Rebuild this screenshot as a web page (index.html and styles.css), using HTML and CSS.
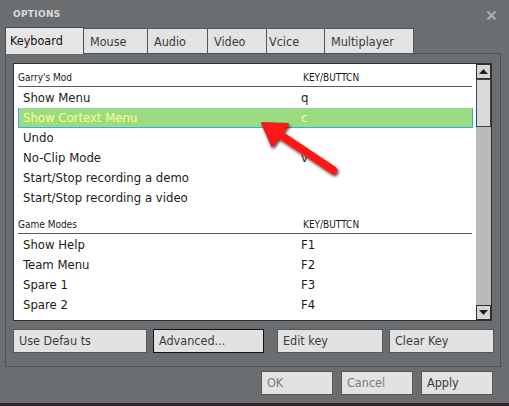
FILE: index.html
```html
<!DOCTYPE html>
<html>
<head>
<meta charset="utf-8">
<link rel="stylesheet" href="styles.css">
</head>
<body>
<div class="window">
  <div class="titlebar">
    <span class="title">OPTIONS</span>
    <svg class="close" width="11" height="11" viewBox="0 0 11 11"><path d="M1.5 1.5 L9.5 9.5 M9.5 1.5 L1.5 9.5" stroke="#a9abac" stroke-width="2.4" fill="none"/></svg>
  </div>
  <div class="tabs">
    <div class="tab active t-keyboard">Keyboard</div>
    <div class="tab t-mouse">Mouse</div>
    <div class="tab t-audio">Audio</div>
    <div class="tab t-video">Video</div>
    <div class="tab t-voice">Vcice</div>
    <div class="tab t-multi">Multiplayer</div>
  </div>
  <div class="panel">
    <div class="listbox">
      <div class="list">
        <div class="section first"><span class="col1">Garry's Mod</span><span>KEY/BUTTCN</span></div>
        <div class="row"><span class="col1">Show Menu</span><span>q</span></div>
        <div class="row selected"><span class="col1">Show Cortext Menu</span><span>c</span></div>
        <div class="row"><span class="col1">Undo</span><span></span></div>
        <div class="row"><span class="col1">No-Clip Mode</span><span>v</span></div>
        <div class="row"><span class="col1">Start/Stop recording a demo</span><span></span></div>
        <div class="row"><span class="col1">Start/Stop recording a video</span><span></span></div>
        <div class="section"><span class="col1">Game Modes</span><span>KEY/BUTTCN</span></div>
        <div class="row"><span class="col1">Show Help</span><span>F1</span></div>
        <div class="row"><span class="col1">Team Menu</span><span>F2</span></div>
        <div class="row"><span class="col1">Spare 1</span><span>F3</span></div>
        <div class="row"><span class="col1">Spare 2</span><span>F4</span></div>
      </div>
      <div class="scrollbar">
        <div class="sb-btn"><svg width="9" height="5" viewBox="0 0 9 5"><path d="M4.5 0 L9 5 L0 5 Z" fill="#1e1e1e"/></svg></div>
        <div class="sb-track"><div class="sb-thumb"></div></div>
        <div class="sb-btn"><svg width="9" height="5" viewBox="0 0 9 5"><path d="M0 0 L9 0 L4.5 5 Z" fill="#1e1e1e"/></svg></div>
      </div>
    </div>
    <div class="actions">
      <div class="btn b-defaults">Use Defau ts</div>
      <div class="btn focus b-advanced">Advanced...</div>
      <div class="btn b-edit">Edit key</div>
      <div class="btn b-clear">Clear Key</div>
    </div>
  </div>
  <div class="footer">
    <div class="btn disabled b-foot">OK</div>
    <div class="btn disabled b-foot">Cancel</div>
    <div class="btn b-foot">Apply</div>
  </div>
</div>
<svg class="arrow" width="509" height="406" viewBox="0 0 509 406">
  <defs>
    <filter id="sh" x="-20%" y="-20%" width="140%" height="140%">
      <feDropShadow dx="1.5" dy="2" stdDeviation="1.5" flood-color="#000" flood-opacity="0.75"/>
    </filter>
  </defs>
  <g filter="url(#sh)">
    <line x1="333" y1="170" x2="276" y2="132" stroke="#ff1414" stroke-width="8" stroke-linecap="round"/>
    <path d="M262 123 L288 124 L272 146 Z" fill="#ff1414" stroke="#ff1414" stroke-width="2" stroke-linejoin="round"/>
  </g>
</svg>
</body>
</html>
```
FILE: styles.css
```css
html, body {
  margin: 0;
  padding: 0;
}
body {
  width: 509px;
  height: 406px;
  background: #2b2822;
  overflow: hidden;
  position: relative;
  font-family: "DejaVu Sans Condensed", "DejaVu Sans", sans-serif;
  font-size: 12px;
  color: #222;
}
.window {
  width: 509px;
  height: 403px;
  background: #6b6e70;
  box-sizing: border-box;
  display: flex;
  flex-direction: column;
}
.titlebar {
  height: 27px;
  display: flex;
  align-items: center;
  justify-content: space-between;
  padding: 0 12px 0 13px;
  box-sizing: border-box;
}
.title {
  font-family: "DejaVu Sans", sans-serif;
  font-weight: bold;
  font-size: 9px;
  color: #dcdcdc;
  letter-spacing: 0.3px;
  margin-top: 1px;
}
.close {
  display: block;
  margin-top: 3px;
}
.tabs {
  height: 26px;
  display: flex;
  align-items: flex-end;
  padding-left: 5px;
  position: relative;
  z-index: 2;
}
.tab {
  height: 25px;
  box-sizing: border-box;
  background: #e3e3e3;
  border: 1px solid #55585a;
  border-left-width: 0;
  border-bottom: none;
  color: #3a3a3a;
  font-size: 12.5px;
  line-height: 25px;
  padding-left: 6px;
}
.tab.active {
  height: 27px;
  margin-bottom: -1px;
  border-left-width: 1px;
  border-color: #4a4d4f;
  background: #e6e6e6;
  color: #111;
  line-height: 25px;
  padding-left: 4px;
}
.t-keyboard { width: 79px; }
.t-mouse { width: 64px; }
.t-audio { width: 60px; }
.t-video { width: 59px; }
.t-voice { width: 58px; padding-left: 2px; }
.t-multi { width: 89px; }
.panel {
  margin-left: 5px;
  width: 496px;
  box-sizing: border-box;
  border: 1px solid #4f5254;
  padding: 9px 8px 13px 7px;
}
.listbox {
  height: 258px;
  box-sizing: border-box;
  border: 1px solid #2f3032;
  background: #fff;
  display: flex;
}
.list {
  flex: 1;
  padding: 0 2px 0 4px;
}
.section {
  display: grid;
  grid-template-columns: 285px 1fr;
  font-size: 10px;
  color: #1a1a1a;
  line-height: 14px;
  padding-top: 6px;
  padding-bottom: 1px;
  border-bottom: 1px solid #5e5e5e;
  margin-bottom: 1px;
  margin-right: 1px;
}
.section.first {
  padding-top: 7px;
}
.section:not(.first) {
  padding-top: 10px;
  padding-bottom: 1px;
}
.row {
  display: grid;
  grid-template-columns: 278px 1fr;
  height: 20px;
  line-height: 20px;
  box-sizing: border-box;
  padding-left: 5px;
  white-space: nowrap;
  color: #1a1a1a;
  font-size: 13px;
}
.row.selected {
  background: #9bdc82;
  color: #ffff88;
  border: 1px solid #3aa8f0;
  border-top: none;
  padding-left: 4px;
  line-height: 19px;
}
.scrollbar {
  width: 15px;
  display: flex;
  flex-direction: column;
  background: #b9b9b9;
  border-left: 1px solid #fff;
}
.sb-btn {
  height: 15px;
  box-sizing: border-box;
  border: 1px solid #2e2e2e;
  background: #d6d6d6;
  display: flex;
  align-items: center;
  justify-content: center;
}
.sb-track {
  flex: 1;
  background: #bababa;
}
.sb-thumb {
  height: 48px;
  box-sizing: border-box;
  border: 1px solid #444;
  background: #d9d9d9;
}
.actions {
  display: flex;
  margin-top: 8px;
  height: 24px;
}
.btn {
  height: 24px;
  box-sizing: border-box;
  background: #e2e2e2;
  border: 1px solid #56595b;
  color: #3c3c3c;
  font-size: 12.5px;
  line-height: 22px;
  padding-left: 5px;
  white-space: nowrap;
}
.btn.focus {
  border-color: #111;
}
.btn.disabled {
  color: #7a7a7a;
}
.b-defaults { width: 134px; }
.b-advanced { width: 111px; margin-left: 6px; }
.b-edit { width: 106px; margin-left: 13px; }
.b-clear { width: 105px; margin-left: 6px; margin-right: -2px; }
.footer {
  display: flex;
  justify-content: flex-end;
  gap: 8px;
  padding-right: 16px;
  margin-top: 4px;
}
.b-foot { width: 72px; }
.arrow {
  position: absolute;
  left: 0;
  top: 0;
  pointer-events: none;
}
```
